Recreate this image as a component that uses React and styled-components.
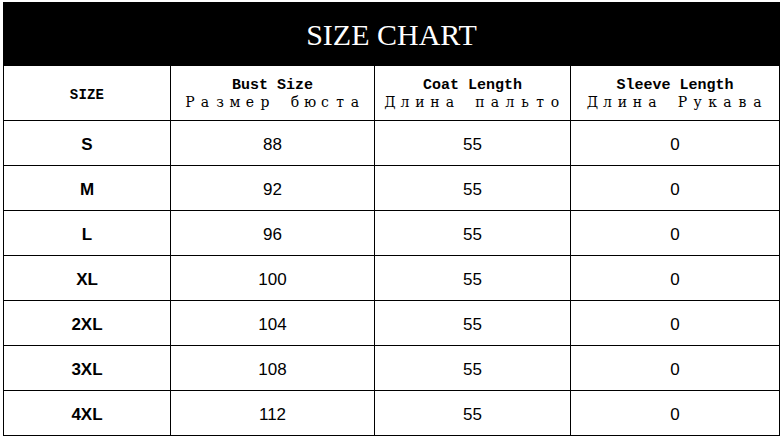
import React from "react";
import styled, { createGlobalStyle } from "styled-components";

const Global = createGlobalStyle`
  html, body { margin: 0; padding: 0; background: #fff; }
  body { font-family: "Liberation Sans", Arial, sans-serif; }
`;

const Page = styled.div`
  padding: 2px 0 0 3px;
  width: 783px;
  height: 437px;
  box-sizing: border-box;
  overflow: hidden;
`;

const Title = styled.div`
  width: 777px;
  height: 64px;
  background: #000;
  color: #fff;
  display: flex;
  align-items: center;
  justify-content: center;
  font-family: "Liberation Serif", "Times New Roman", serif;
  font-size: 30px;
  padding-top: 2px;
  box-sizing: border-box;
`;

const Grid = styled.div`
  display: grid;
  grid-template-columns: 167px 204px 196px 209px;
  grid-template-rows: 55px repeat(7, 45px);
  width: 777px;
  border-left: 1px solid #000;
  box-sizing: border-box;
`;

const Cell = styled.div`
  border-right: 1px solid #000;
  border-bottom: 1px solid #000;
  box-sizing: border-box;
  display: flex;
  flex-direction: column;
  align-items: center;
  justify-content: center;
  font-family: "Liberation Sans", Arial, sans-serif;
  font-size: 17px;
  font-weight: ${(p) => (p.$bold ? 700 : 400)};
  color: #000;
  padding-top: ${(p) => (p.$head ? "0" : "3px")};
`;

const SizeLabel = styled.span`
  font-family: "Liberation Mono", "Courier New", monospace;
  font-weight: 700;
  font-size: 14px;
  letter-spacing: 0.2px;
  padding-top: 4px;
`;

const Latin = styled.span`
  font-family: "Liberation Mono", "Courier New", monospace;
  font-size: 15px;
  line-height: 17px;
  font-weight: 700;
  padding-top: 1px;
`;

const CyrLine = styled.span`
  display: flex;
  height: 17px;
  line-height: 17px;
`;

const Glyph = styled.span`
  display: inline-block;
  width: 15px;
  height: 17px;
  line-height: 17px;
  text-align: center;
  font-family: "DejaVu Serif", "Liberation Serif", serif;
  font-size: 14px;
`;

const headers = [
  ["Bust Size", "Размер бюста"],
  ["Coat Length", "Длина пальто"],
  ["Sleeve Length", "Длина Рукава"],
];

const rows = [
  ["S", 88],
  ["M", 92],
  ["L", 96],
  ["XL", 100],
  ["2XL", 104],
  ["3XL", 108],
  ["4XL", 112],
];

export default function App() {
  return (
    <Page>
      <Global />
      <Title>SIZE CHART</Title>
      <Grid>
        <Cell $head>
          <SizeLabel>SIZE</SizeLabel>
        </Cell>
        {headers.map(([en, ru]) => (
          <Cell $head key={en}>
            <Latin>{en}</Latin>
            <CyrLine aria-label={ru}>
              {Array.from(ru).map((ch, i) => (
                <Glyph key={i}>{ch === " " ? "\u00a0" : ch}</Glyph>
              ))}
            </CyrLine>
          </Cell>
        ))}
        {rows.map(([s, b]) => (
          <React.Fragment key={s}>
            <Cell $bold>{s}</Cell>
            <Cell>{b}</Cell>
            <Cell>55</Cell>
            <Cell>0</Cell>
          </React.Fragment>
        ))}
      </Grid>
    </Page>
  );
}
